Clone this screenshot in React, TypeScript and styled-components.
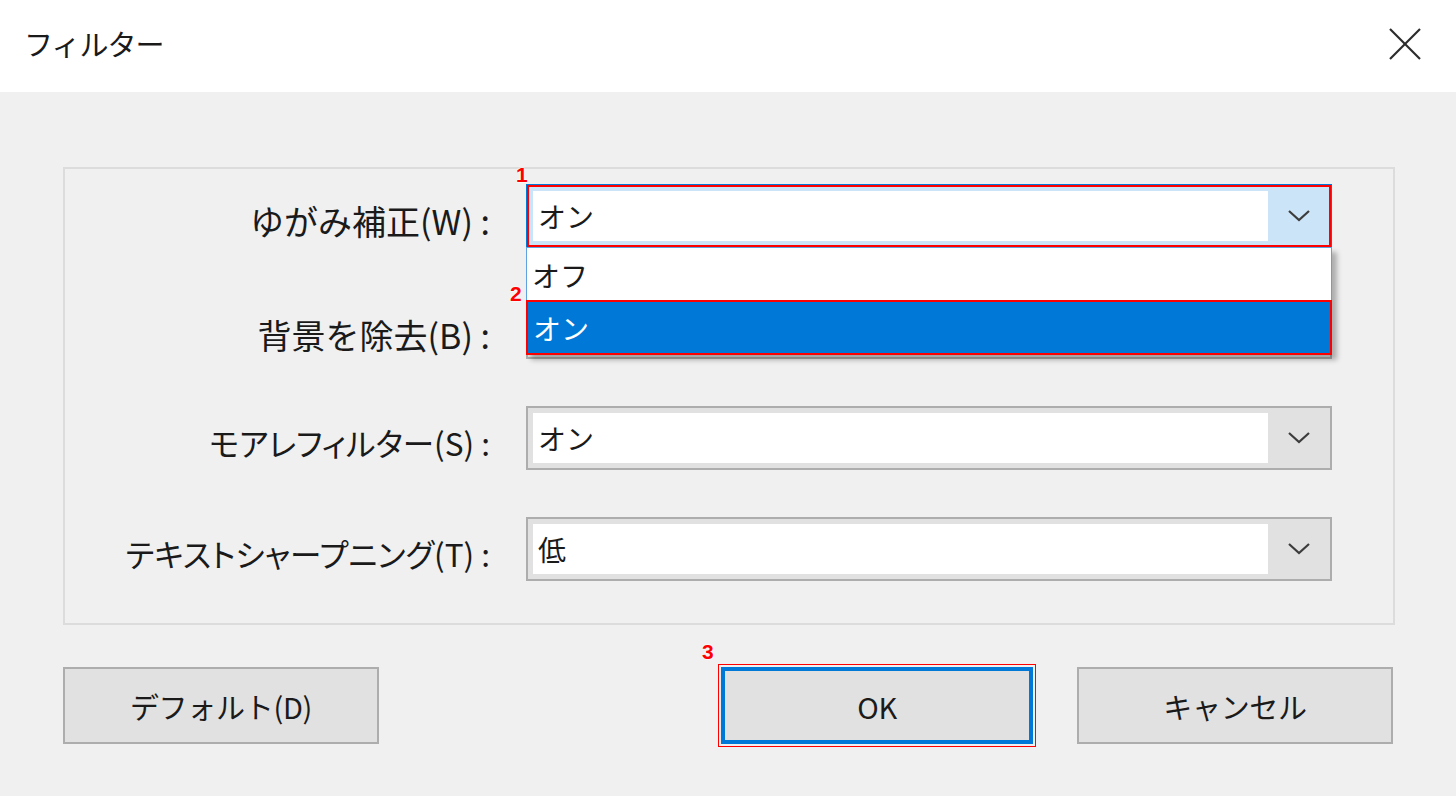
import React from 'react';
import styled, { createGlobalStyle, css } from 'styled-components';

const GlobalStyle = createGlobalStyle`
  html, body {
    margin: 0;
    padding: 0;
    background: #f0f0f0;
  }
  body {
    font-family: 'Noto Sans CJK JP', 'Noto Sans', sans-serif;
    color: #1a1a1a;
  }
`;

const fields = [
  { label: 'ゆがみ補正(W) :', value: 'オン', open: true, kana: false },
  { label: '背景を除去(B) :', value: 'オン', open: false, kana: false },
  { label: 'モアレフィルター(S) :', value: 'オン', open: false, kana: true },
  { label: 'テキストシャープニング(T) :', value: '低', open: false, kana: true },
];

const Window = styled.div`
  width: 1456px;
  height: 796px;
  background: #f0f0f0;
  overflow: hidden;
`;

const TitleBar = styled.div`
  height: 92px;
  background: #ffffff;
  display: flex;
  align-items: center;
  justify-content: space-between;
  padding: 0 34px 0 24px;
  box-sizing: border-box;
`;

const Title = styled.div`
  font-size: 29px;
  letter-spacing: -1px;
  margin-top: -6px;
`;

const CloseButton = styled.div`
  width: 34px;
  height: 34px;
  margin-top: -4px;
  display: flex;
  align-items: center;
  justify-content: center;
`;

const Content = styled.div`
  padding: 75px 61px 0 63px;
`;

const GroupBox = styled.div`
  height: 458px;
  box-sizing: border-box;
  border: 2px solid #dcdcdc;
`;

const FieldGrid = styled.div`
  display: grid;
  grid-template-columns: 1fr 806px;
  grid-auto-rows: 64px;
  column-gap: 36px;
  row-gap: 47px;
  padding: 15px 61px 0 0;
`;

const Label = styled.div<{ $shift?: number; $kana?: boolean }>`
  display: flex;
  align-items: center;
  justify-content: flex-end;
  font-size: ${(p) => (p.$kana ? 31.5 : 34)}px;
  font-feature-settings: ${(p) => (p.$kana ? "'palt'" : 'normal')};
  white-space: nowrap;
  position: relative;
  top: ${(p) => p.$shift ?? 0}px;
`;

const Combo = styled.div<{ $focused?: boolean }>`
  position: relative;
  display: flex;
  box-sizing: border-box;
  height: 64px;
  padding: 5px 0 5px 5px;
  border: 2px solid #adadad;
  background: #e1e1e1;
  ${(p) =>
    p.$focused &&
    css`
      border-color: #0078d7;
      background: #cce4f7;
    `}
`;

const ComboText = styled.div`
  flex: 1;
  background: #ffffff;
  display: flex;
  align-items: center;
  padding-left: 5px;
  font-size: 28px;
`;

const DropArrow = styled.div`
  width: 62px;
  display: flex;
  align-items: center;
  justify-content: center;
`;

const DropList = styled.div`
  position: absolute;
  left: -2px;
  right: -2px;
  top: calc(100% + 1px);
  background: #ffffff;
  border: 1px solid #5ea3e0;
  box-shadow: 5px 5px 5px rgba(0, 0, 0, 0.28);
  z-index: 5;
`;

const DropItem = styled.div<{ $selected?: boolean }>`
  position: relative;
  height: 53px;
  display: flex;
  align-items: center;
  padding-left: 5px;
  font-size: 28px;
  box-sizing: border-box;
  ${(p) =>
    p.$selected &&
    css`
      background: #0078d7;
      color: #ffffff;
      border: 1px dotted #9a8f7a;
    `}
`;

const Marker = styled.span<{ $x: number; $y: number }>`
  position: absolute;
  left: ${(p) => p.$x}px;
  top: ${(p) => p.$y}px;
  font-family: 'Liberation Sans', Arial, sans-serif;
  font-weight: bold;
  font-size: 21px;
  color: #ff0000;
  line-height: 1;
  text-shadow: 0 0 2px #fff, 0 0 2px #fff;
  z-index: 8;
`;

const RedFrame = styled.span<{ $inset: number; $width?: number }>`
  position: absolute;
  inset: ${(p) => p.$inset}px;
  border: ${(p) => p.$width ?? 2}px solid #ff0000;
  pointer-events: none;
  z-index: 7;
`;

const ButtonRow = styled.div`
  display: flex;
  align-items: center;
  margin-top: 42px;
  padding-right: 2px;
`;

const Spacer = styled.div`
  flex: 1;
`;

const Button = styled.div<{ $primary?: boolean; $gap?: number }>`
  position: relative;
  width: 316px;
  height: 77px;
  box-sizing: border-box;
  margin-left: ${(p) => p.$gap ?? 0}px;
  background: #e1e1e1;
  border: 2px solid #adadad;
  display: flex;
  align-items: center;
  justify-content: center;
  font-size: 29px;
  letter-spacing: -0.3px;
  ${(p) =>
    p.$primary &&
    css`
      width: 312px;
      border: 4px solid #0078d7;
    `}
`;

const Chevron = () => (
  <svg width="24" height="14" viewBox="0 0 24 14">
    <polyline points="2,2 12,11 22,2" fill="none" stroke="#3c3c3c" strokeWidth="2.2" />
  </svg>
);

const CloseIcon = () => (
  <svg width="34" height="34" viewBox="0 0 34 34">
    <line x1="2" y1="2" x2="32" y2="32" stroke="#2b2b2b" strokeWidth="2.2" />
    <line x1="32" y1="2" x2="2" y2="32" stroke="#2b2b2b" strokeWidth="2.2" />
  </svg>
);

export default function App() {
  return (
    <Window>
      <GlobalStyle />
      <TitleBar>
        <Title>フィルター</Title>
        <CloseButton>
          <CloseIcon />
        </CloseButton>
      </TitleBar>
      <Content>
        <GroupBox>
          <FieldGrid>
            {fields.map((f, i) => (
              <React.Fragment key={f.label}>
                <Label $kana={f.kana} $shift={i === 1 ? 7 : 4}>
                  {f.label}
                </Label>
                <Combo $focused={f.open}>
                  <ComboText>{f.value}</ComboText>
                  <DropArrow>
                    <Chevron />
                  </DropArrow>
                  {f.open && (
                    <>
                      <Marker $x={-12} $y={-22}>1</Marker>
                      <RedFrame $inset={-1} />
                      <DropList>
                        <DropItem>オフ</DropItem>
                        <DropItem $selected>
                          オン
                          <RedFrame $inset={-2} />
                          <Marker $x={-18} $y={-19}>2</Marker>
                        </DropItem>
                      </DropList>
                    </>
                  )}
                </Combo>
              </React.Fragment>
            ))}
          </FieldGrid>
        </GroupBox>
        <ButtonRow>
          <Button>デフォルト(D)</Button>
          <Spacer />
          <Button $primary>
            OK
            <RedFrame $inset={-7} $width={1} />
            <Marker $x={-23} $y={-30}>3</Marker>
          </Button>
          <Button $gap={44}>キャンセル</Button>
        </ButtonRow>
      </Content>
    </Window>
  );
}
